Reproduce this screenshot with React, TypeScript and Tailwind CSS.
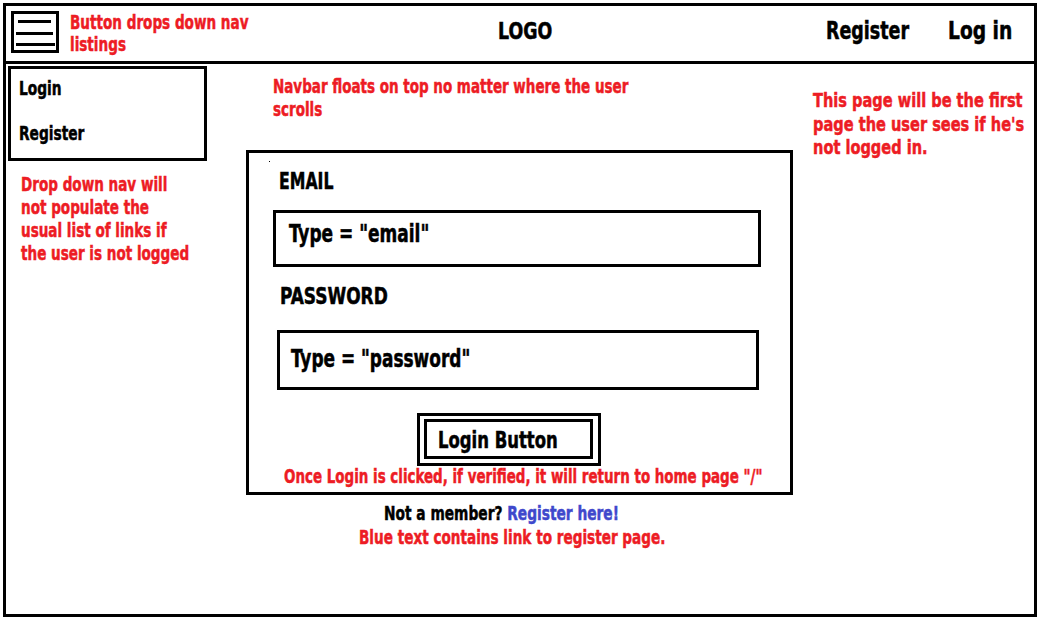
function Sq({ s, className = '', children }: { s: string; className?: string; children: React.ReactNode }) {
  // Impact-like narrow text: DejaVu Sans Condensed squeezed horizontally
  return <span className={`inline-block origin-left whitespace-nowrap ${s} ${className}`}>{children}</span>;
}

export default function App() {
  return (
    <div className="h-[626px] w-[1044px] bg-white pl-[3px] pt-[3px] font-bold text-black [-webkit-text-stroke:0.5px_currentColor] [font-family:'DejaVu_Sans_Condensed','DejaVu_Sans',sans-serif]">
      <div className="flex h-[614px] w-[1034px] flex-col border-[3px] border-black">
        {/* navbar */}
        <header className="flex h-[58px] shrink-0 items-start border-b-[3px] border-black pt-[5px]">
          <div className="flex w-[492px] shrink-0 items-start">
            <button className="ml-[5px] h-[42px] w-[48px] shrink-0 border-[3px] border-black">
              <svg width="42" height="36" viewBox="0 0 42 36" className="block">
                <rect x="4" y="6" width="33" height="3" fill="#000" />
                <rect x="2" y="18" width="37" height="3" fill="#000" />
                <rect x="2" y="29" width="39" height="3" fill="#000" />
              </svg>
            </button>
            <p className="ml-[11px] origin-left scale-x-[0.754] whitespace-nowrap text-[20px] leading-[22px] text-[#ed1c24]">
              Button drops down nav
              <br />
              listings
            </p>
          </div>
          <div className="mt-[7px] flex flex-1 items-baseline leading-none">
            <div className="w-[328px] shrink-0">
              <Sq s="scale-x-[0.84]" className="text-[23px]">LOGO</Sq>
            </div>
            <a className="w-[122px] shrink-0">
              <Sq s="scale-x-[0.81]" className="text-[24px]">Register</Sq>
            </a>
            <a>
              <Sq s="scale-x-[0.83]" className="text-[25px]">Log in</Sq>
            </a>
          </div>
        </header>

        <main className="flex flex-1">
          {/* left column: dropdown nav */}
          <div className="w-[240px] shrink-0 pl-[2px] pt-[2px]">
            <nav className="h-[95px] w-[199px] border-[3px] border-black pl-[8px] pt-[8px] text-[20px] leading-[23px]">
              <a className="block origin-left scale-x-[0.765]">Login</a>
              <a className="mt-[22px] block origin-left scale-x-[0.765]">Register</a>
            </nav>
            <p className="ml-[13px] mt-[12px] origin-left scale-x-[0.753] whitespace-nowrap text-[20px] leading-[23px] text-[#ed1c24]">
              Drop down nav will
              <br />
              not populate the
              <br />
              usual list of links if
              <br />
              the user is not logged
            </p>
          </div>

          {/* middle column: login form */}
          <div className="w-[547px] shrink-0">
            <p className="ml-[27px] mt-[11px] origin-left scale-x-[0.749] whitespace-nowrap text-[20px] leading-[23px] text-[#ed1c24]">
              Navbar floats on top no matter where the user
              <br />
              scrolls
            </p>
            <form className="relative mt-[29px] h-[345px] w-[547px] border-[3px] border-black">
              <span className="absolute left-[20px] top-[8px] h-px w-px bg-black" />
              <label className="ml-[30px] block origin-left scale-x-[0.76] pt-[16px] text-[23px] leading-[24px]">EMAIL</label>
              <div className="ml-[24px] mt-[17px] h-[57px] w-[488px] border-[3px] border-black pl-[13px] pt-[9px] text-[24px] leading-[24px]">
                <Sq s="scale-x-[0.787]">Type = "email"</Sq>
              </div>
              <label className="ml-[31px] mt-[17px] block origin-left scale-x-[0.82] text-[23px] leading-[24px]">PASSWORD</label>
              <div className="ml-[28px] mt-[22px] h-[60px] w-[482px] border-[3px] border-black pl-[11px] pt-[14px] text-[24px] leading-[24px]">
                <Sq s="scale-x-[0.785]">Type = "password"</Sq>
              </div>
              <div className="ml-[168px] mt-[23px] h-[53px] w-[184px] border-[3px] border-black pl-[4px] pt-[3px]">
                <button type="button" className="block h-[40px] w-[169px] border-[3px] border-black pl-[11px] pt-[2px] text-left text-[23px] leading-[23px]">
                  <Sq s="scale-x-[0.796]">Login Button</Sq>
                </button>
              </div>
              <p className="ml-[35px] origin-left scale-x-[0.747] whitespace-nowrap text-[20px] leading-[20px] text-[#ed1c24]">
                Once Login is clicked, if verified, it will return to home page "/"
              </p>
            </form>
            <p className="ml-[138px] mt-[6px] origin-left scale-x-[0.765] whitespace-nowrap text-[20px] leading-[24px]">
              Not a member? <a className="text-[#3f48cc]">Register here!</a>
            </p>
            <p className="ml-[113px] origin-left scale-x-[0.756] whitespace-nowrap text-[20px] leading-[24px] text-[#ed1c24]">
              Blue text contains link to register page.
            </p>
          </div>

          {/* right column */}
          <div className="flex-1 overflow-hidden">
            <p className="ml-[20px] mt-[25px] origin-left scale-x-[0.81] whitespace-nowrap text-[20px] leading-[23.5px] text-[#ed1c24]">
              This page will be the first
              <br />
              page the user sees if he's
              <br />
              not logged in.
            </p>
          </div>
        </main>
      </div>
    </div>
  );
}
